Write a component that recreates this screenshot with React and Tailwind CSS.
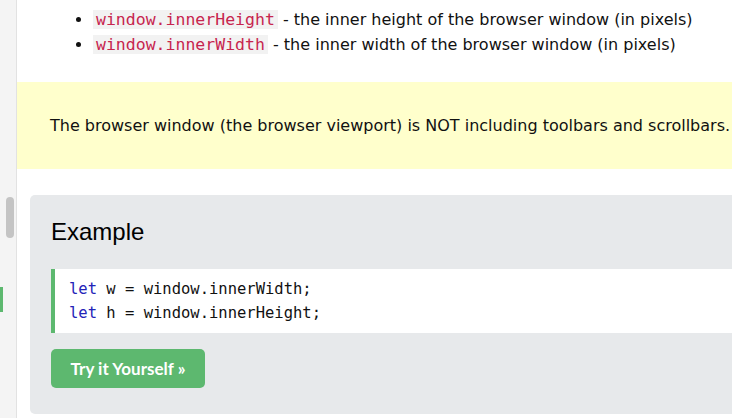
export default function App() {
  const body = { fontFamily: '"DejaVu Sans", Verdana, sans-serif' };
  const mono = { fontFamily: '"DejaVu Sans Mono", "Liberation Mono", monospace' };

  return (
    <div className="flex h-[418px] w-[732px] overflow-hidden bg-white text-[#111]" style={body}>
      {/* Left rail with scrollbar */}
      <div className="relative w-[17px] shrink-0 border-r border-[#e2e2e2] bg-[#f4f4f4]">
        <div className="ml-[6px] mt-[197px] h-[41px] w-[8px] rounded-full bg-[#c4c4c4]" />
        <div className="mt-[49px] h-[25px] w-[3px] bg-[#5db86f]" />
      </div>

      {/* Main content */}
      <div className="min-w-0 flex-1">
        <ul className="mt-[7px] list-disc pl-[76px] text-[16px] leading-[25px]">
          <li className="whitespace-nowrap">
            <code className="bg-[#f2f2f2] px-[3px] text-[16.5px] text-[#c7254e]" style={mono}>window.innerHeight</code>
            {' '}- the inner height of the browser window (in pixels)
          </li>
          <li className="whitespace-nowrap">
            <code className="bg-[#f2f2f2] px-[3px] text-[16.5px] text-[#c7254e]" style={mono}>window.innerWidth</code>
            {' '}- the inner width of the browser window (in pixels)
          </li>
        </ul>

        {/* Note */}
        <div className="mt-[25px] flex h-[87px] items-center bg-[#ffffcc] pl-[33px] text-[16px]">
          <p className="whitespace-nowrap">The browser window (the browser viewport) is NOT including toolbars and scrollbars.</p>
        </div>

        {/* Example panel */}
        <div className="ml-[13px] mt-[26px] rounded-l-[5px] bg-[#e7e9eb] pb-[26px] pl-[21px] pt-[21px]">
          <h2 className="text-[24px] leading-[32px] text-black" style={{ fontFamily: '"Liberation Sans", Arial, sans-serif' }}>
            Example
          </h2>
          <div className="mt-[21px] border-l-4 border-[#5db86f] bg-white py-[8px] pl-[14px] text-[15.5px] leading-[24px]" style={mono}>
            <div><span className="text-[#2323b8]">let</span> w = window.innerWidth;</div>
            <div><span className="text-[#2323b8]">let</span> h = window.innerHeight;</div>
          </div>
          <button
            className="mt-[16px] h-[39px] w-[154px] rounded-[5px] bg-[#5db86f] text-[17px] font-bold text-white"
            style={{ fontFamily: 'Lato, "Open Sans", sans-serif' }}
          >
            Try it Yourself »
          </button>
        </div>
      </div>
    </div>
  );
}
